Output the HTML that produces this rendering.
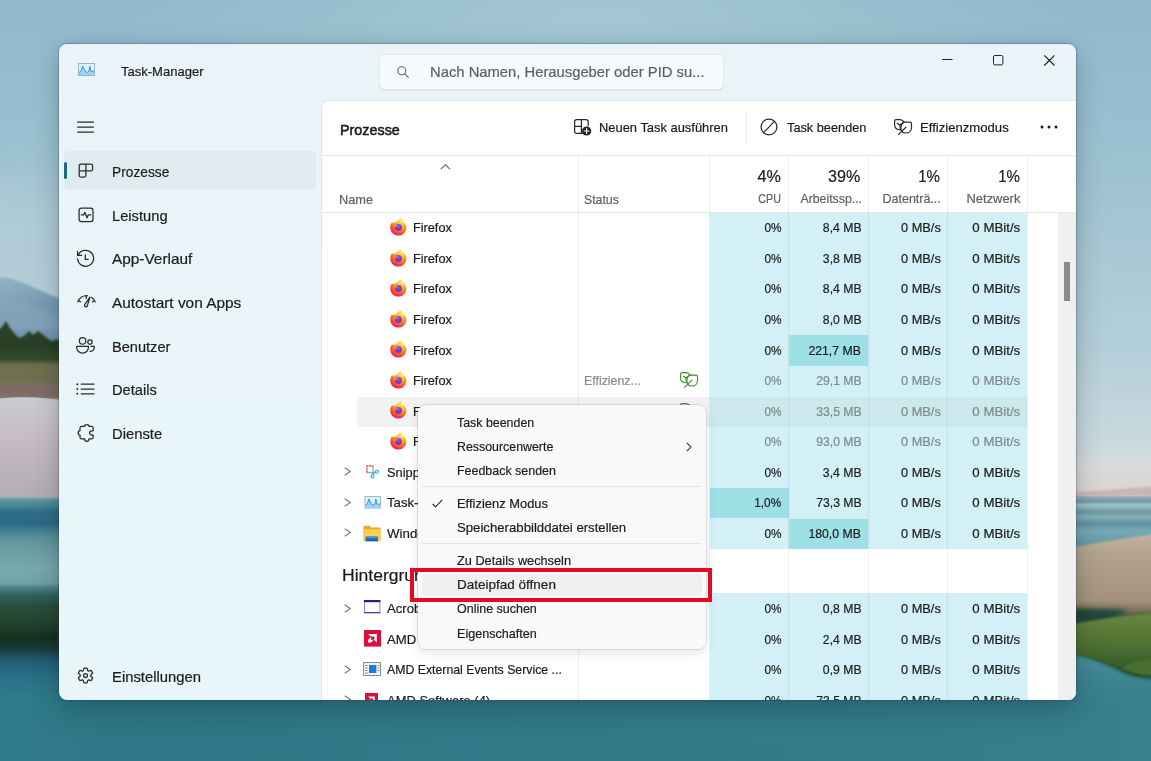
<!DOCTYPE html>
<html lang="de"><head><meta charset="utf-8"><title>Task-Manager</title>
<style>
html,body{margin:0;padding:0;}
body{width:1151px;height:761px;overflow:hidden;position:relative;background:#3f8896;font-family:"Liberation Sans",sans-serif;}
.wall{position:absolute;left:0;top:0;}
.ic{position:absolute;overflow:visible;}
.t{position:absolute;white-space:nowrap;line-height:1;-webkit-text-stroke:0.2px currentColor;}
.semi{-webkit-text-stroke:0.55px #1a1a1a;}
.win{position:absolute;left:59px;top:44px;width:1017px;height:656px;border-radius:8px;background:linear-gradient(180deg,#eaf3f8 0px,#e9f4f8 120px,#e8f5f9 420px);
 box-shadow:0 0 0 1px rgba(40,60,72,0.26), 0 10px 30px rgba(0,0,0,0.21), 0 0 10px rgba(0,0,0,0.09);}
.search{position:absolute;left:380px;top:55px;width:343px;height:33.5px;border-radius:5px;background:#f8fbfd;box-shadow:0 0 0 1px #e1e9ed, 0 1px 0 1px #d6dfe3;}
.navsel{position:absolute;left:64px;top:151px;width:252px;height:39px;border-radius:5px;background:#e0ebef;}
.navbar{position:absolute;left:64.3px;top:162.3px;width:3px;height:16.6px;border-radius:1.5px;background:#1f6a80;}
.panel{position:absolute;left:321px;top:100px;width:755px;height:600px;box-sizing:border-box;background:#fff;border-top-left-radius:8px;border-bottom-right-radius:8px;border-left:1px solid #dfe7ea;border-top:1px solid #dfe7ea;}
.tbdiv{position:absolute;left:745.6px;top:110px;width:1px;height:34px;background:#ececec;}
.hl{position:absolute;left:322px;width:754px;height:1px;background:#e6ecee;}
.blue{position:absolute;left:709.8px;width:317.7px;background:#d2f0f5;}
.dk{position:absolute;background:#9de0e6;}
.vl{position:absolute;top:156px;width:1px;height:544px;background:rgba(120,130,135,0.13);}
.selrow{position:absolute;left:356.5px;top:397px;width:353.3px;height:29.7px;background:#f1f3f3;}
.selblue{position:absolute;left:709.8px;top:397px;width:317.7px;height:29.7px;background:#cce8ec;}
.sbtrack{position:absolute;left:1058px;top:212.5px;width:18px;height:487.5px;background:#f0f0f0;border-bottom-right-radius:8px;}
.sbthumb{position:absolute;left:1064.2px;top:262px;width:5.6px;height:39px;background:#8b8b8b;}
.clip{position:absolute;left:0;top:0;width:1151px;height:700px;overflow:hidden;}
.menu{position:absolute;left:418px;top:405px;width:288px;height:244px;border-radius:8px;background:#f9f9f9;box-shadow:0 0 0 1px rgba(0,0,0,0.09), 0 4px 12px rgba(0,0,0,0.10);}
.mhl{position:absolute;left:421.5px;top:574px;width:280.7px;height:22.4px;border-radius:4px;background:#efefef;}
.msep{position:absolute;left:422px;width:280px;height:1px;background:#e4e4e4;}
.red{position:absolute;left:410px;top:568px;width:301.5px;height:34.2px;box-sizing:border-box;border:4.5px solid #e30b20;}
</style></head>
<body>
<svg width="0" height="0" style="position:absolute"><defs><radialGradient id="ffg" cx="0.7" cy="0.15" r="0.95"><stop offset="0" stop-color="#fff36b"/><stop offset="0.3" stop-color="#ffbd2e"/><stop offset="0.6" stop-color="#ff7a1a"/><stop offset="0.85" stop-color="#f5304c"/><stop offset="1" stop-color="#e0207a"/></radialGradient><radialGradient id="ffp" cx="0.5" cy="0.3" r="0.7"><stop offset="0" stop-color="#9a4df0"/><stop offset="1" stop-color="#5a35c8"/></radialGradient></defs></svg>

<svg class="wall" width="1151" height="761" viewBox="0 0 1151 761">
<defs>
<linearGradient id="sky" x1="0" y1="0" x2="0" y2="1">
<stop offset="0" stop-color="#8fb9cb"/><stop offset="0.2" stop-color="#9bc1d1"/><stop offset="0.46" stop-color="#b4cfd9"/><stop offset="0.59" stop-color="#cbdadf"/><stop offset="0.61" stop-color="#d8dbdd"/><stop offset="0.64" stop-color="#dcd5d6"/><stop offset="1" stop-color="#dcd5d6"/>
</linearGradient>
<radialGradient id="skyglow" cx="0.52" cy="0.05" r="0.42">
<stop offset="0" stop-color="#a6c8d4" stop-opacity="0.9"/><stop offset="1" stop-color="#a6c8d4" stop-opacity="0"/>
</radialGradient>
<linearGradient id="lwater" x1="0" y1="0" x2="0" y2="1">
<stop offset="0" stop-color="#9fb0ba"/><stop offset="0.011" stop-color="#5a94a2"/><stop offset="0.03" stop-color="#4a8796"/><stop offset="0.044" stop-color="#3a7a8e"/><stop offset="0.052" stop-color="#2f6f88"/><stop offset="0.1" stop-color="#2d6a85"/><stop offset="0.122" stop-color="#3f7f90"/><stop offset="0.148" stop-color="#5b9098"/><stop offset="0.196" stop-color="#6a9fa5"/><stop offset="0.27" stop-color="#78a9ab"/><stop offset="0.32" stop-color="#6fa0a3"/><stop offset="0.332" stop-color="#4f858c"/><stop offset="0.365" stop-color="#2f6058"/><stop offset="0.406" stop-color="#2a4d3a"/><stop offset="0.476" stop-color="#22402c"/><stop offset="0.52" stop-color="#14301f"/><stop offset="0.557" stop-color="#173a38"/><stop offset="0.598" stop-color="#215a6e"/><stop offset="0.657" stop-color="#266a83"/><stop offset="0.716" stop-color="#2b7088"/><stop offset="0.75" stop-color="#2f7a8c"/><stop offset="0.86" stop-color="#2f7b8b"/><stop offset="1" stop-color="#2f7888"/>
</linearGradient>
<linearGradient id="rwater" x1="0" y1="0" x2="0" y2="1">
<stop offset="0" stop-color="#8fa9b5"/><stop offset="0.011" stop-color="#86a6b1"/><stop offset="0.021" stop-color="#6f9aa6"/><stop offset="0.034" stop-color="#9dc6cb"/><stop offset="0.053" stop-color="#7aa6af"/><stop offset="0.06" stop-color="#6c9aa6"/><stop offset="0.08" stop-color="#85b0b6"/><stop offset="0.094" stop-color="#6f9fab"/><stop offset="0.106" stop-color="#5f92a3"/><stop offset="0.128" stop-color="#76a9b3"/><stop offset="0.166" stop-color="#6a9fad"/><stop offset="0.196" stop-color="#5f96a6"/><stop offset="0.43" stop-color="#2f5f5a"/><stop offset="0.487" stop-color="#2f6a70"/><stop offset="0.58" stop-color="#3a8a96"/><stop offset="0.638" stop-color="#468c98"/><stop offset="0.77" stop-color="#3d8591"/><stop offset="1" stop-color="#36808c"/>
</linearGradient>
<linearGradient id="bot" x1="0" y1="0" x2="1" y2="0">
<stop offset="0" stop-color="#2f7b8b"/><stop offset="0.12" stop-color="#2f7786"/><stop offset="0.85" stop-color="#347d8b"/><stop offset="1" stop-color="#37808d"/>
</linearGradient>
<linearGradient id="botfade" x1="0" y1="0" x2="0" y2="1">
<stop offset="0" stop-color="#fff" stop-opacity="0"/><stop offset="1" stop-color="#fff" stop-opacity="1"/>
</linearGradient>
<mask id="botmask"><rect x="0" y="660" width="1151" height="45" fill="url(#botfade)"/><rect x="0" y="704" width="1151" height="60" fill="#fff"/></mask>
<linearGradient id="sand" x1="0" y1="0" x2="0" y2="1">
<stop offset="0" stop-color="#cbcbd2"/><stop offset="0.45" stop-color="#c5bcc2"/><stop offset="1" stop-color="#b2acb4"/>
</linearGradient>
<linearGradient id="mount" x1="0" y1="0" x2="0.3" y2="1">
<stop offset="0" stop-color="#93b3c6"/><stop offset="0.5" stop-color="#7a9db4"/><stop offset="1" stop-color="#7296ae"/>
</linearGradient>
<linearGradient id="reed" x1="0" y1="0" x2="0" y2="1">
<stop offset="0" stop-color="#c2b49e"/><stop offset="0.25" stop-color="#b3a38d"/><stop offset="0.8" stop-color="#a4937c"/><stop offset="0.93" stop-color="#7a6f58"/><stop offset="1" stop-color="#3d4c3c"/>
</linearGradient>
<linearGradient id="grass" x1="0" y1="0" x2="0" y2="1">
<stop offset="0" stop-color="#67883f"/><stop offset="0.6" stop-color="#4e7131"/><stop offset="1" stop-color="#345a28"/>
</linearGradient>
<filter id="b2" x="-20%" y="-20%" width="140%" height="140%"><feGaussianBlur stdDeviation="2"/></filter>
<filter id="b1" x="-20%" y="-20%" width="140%" height="140%"><feGaussianBlur stdDeviation="0.8"/></filter>
</defs>
<rect width="1151" height="761" fill="url(#sky)"/>
<rect width="1151" height="500" fill="url(#skyglow)"/>
<!-- water full width -->
<rect x="0" y="496" width="1151" height="265" fill="url(#rwater)"/>
<!-- left side water/reflection -->
<rect x="-10" y="497" width="330" height="271" fill="url(#lwater)"/>
<!-- bottom strip blend -->
<rect x="0" y="655" width="1151" height="110" fill="url(#bot)" mask="url(#botmask)"/>
<ellipse cx="0" cy="270" rx="170" ry="90" fill="#c2d3d9" opacity="0.35" filter="url(#b2)" style="filter:blur(25px)"/>
<!-- left mountain -->
<path d="M-5 279 C2 277 6 277 12 279 C24 283 36 288 48 294 C55 297 62 299 72 304 L72 345 L-5 345 Z" fill="url(#mount)" filter="url(#b1)"/>
<path d="M-5 300 C10 296 22 300 34 306 C44 311 55 314 72 318 L72 330 L-5 330 Z" fill="#86a8bd" opacity="0.6" filter="url(#b2)"/>
<!-- trees -->
<path d="M-5 332 L2 327 L6 321 L10 328 L14 333 L19 338 L24 336 L29 331 L33 335 L38 331 L42 334 L47 338 L52 341 L57 339 L64 344 L72 346 L72 372 L-5 372 Z" fill="#2c4127" filter="url(#b1)"/>
<rect x="-5" y="350" width="80" height="18" fill="#35492b" opacity="0.7" filter="url(#b2)"/>
<!-- bush -->
<rect x="-5" y="362" width="80" height="30" fill="#6f7050" filter="url(#b2)"/>
<rect x="-5" y="383" width="80" height="17" fill="#7d6d63" filter="url(#b2)"/>
<!-- sand -->
<path d="M-5 399 C20 396 45 397 72 402 L72 497 L-5 497 Z" fill="url(#sand)"/>
<!-- right distant hill -->
<path d="M1060 494 C1095 491 1125 488.5 1155 486.5 L1155 496.5 L1060 496.5 Z" fill="#c6b6b6" filter="url(#b1)"/>
<!-- right reeds -->
<path d="M1068 548 C1095 543 1125 538 1155 533.5 L1155 617 L1068 617 Z" fill="url(#reed)" filter="url(#b1)"/>
<!-- dark water under reeds -->
<path d="M1068 608 L1128 610 L1104 622 L1068 625 Z" fill="#24463a" filter="url(#b2)"/>
<!-- grass shadow -->
<path d="M1068 652 C1090 655 1105 663 1120 670 C1130 676 1142 678 1155 678 L1155 660 L1068 640 Z" fill="#14361f" filter="url(#b2)"/>
<!-- right grass -->
<path d="M1068 625 C1090 621 1120 616 1155 613 L1155 662 C1140 660 1128 663 1120 668 C1105 664 1090 656 1068 653 Z" fill="url(#grass)" filter="url(#b1)"/>
<path d="M1120 668 C1130 661 1142 659 1155 660 L1155 676 C1142 676 1130 673 1120 668 Z" fill="#4a6f2e" filter="url(#b1)"/>
</svg>
<div class="win">
</div>
<svg class="ic" style="left:78px;top:63px" width="17" height="13" viewBox="0 0 17 13" ><rect x="0.5" y="0.5" width="16" height="12" fill="#dff1fb" stroke="#9db4c4" stroke-width="1"/><path d="M1 9.5 L3 8 L4.6 3 L6 6 L7.5 8.8 L9.5 9.3 L11 8 L11.8 3.2 L12.8 8 L14 8.6 L16 8 L16 12 L1 12 Z" fill="#98d2f4"/><path d="M1 9.5 L3 8 L4.6 3 L6 6 L7.5 8.8 L9.5 9.3 L11 8 L11.8 3.2 L12.8 8 L14 8.6 L16 8" fill="none" stroke="#2b8ad8" stroke-width="0.9"/></svg>
<span id="t0" class="t " style="left:120.9px;top:65.86px;font-size:12.8px;color:#1b1b1b;transform:scaleX(1.0173);transform-origin:left center">Task-Manager</span>
<div class="search"></div>
<svg class="ic" style="left:396.5px;top:66px" width="12" height="12" viewBox="0 0 12 12" ><circle cx="4.8" cy="4.8" r="4" fill="none" stroke="#5f6367" stroke-width="1.1"/><path d="M7.8 7.8 L11.3 11.3" stroke="#5f6367" stroke-width="1.1" stroke-linecap="round"/></svg>
<span id="t1" class="t " style="left:430.2px;top:65.07px;font-size:14.8px;color:#5d6164;transform:scaleX(0.9993);transform-origin:left center">Nach Namen, Herausgeber oder PID su...</span>
<svg class="ic" style="left:942px;top:59px" width="11" height="2" viewBox="0 0 11 2" ><rect x="0" y="0" width="10.5" height="1" fill="#222"/></svg>
<svg class="ic" style="left:993px;top:55px" width="11" height="11" viewBox="0 0 11 11" ><rect x="0.5" y="0.5" width="9.4" height="9.4" rx="1.4" fill="none" stroke="#222" stroke-width="1"/></svg>
<svg class="ic" style="left:1044.3px;top:54.6px" width="11" height="11" viewBox="0 0 11 11" ><path d="M0.3 0.3 L10.5 10.5 M10.5 0.3 L0.3 10.5" stroke="#1a1a1a" stroke-width="1.1"/></svg>
<svg class="ic" style="left:77.3px;top:121px" width="17" height="12" viewBox="0 0 17 12" ><path d="M0.6 1 H16.4 M0.6 6 H16.4 M0.6 11 H16.4" fill="none" stroke="#2a2a2a" stroke-width="1.25" stroke-linecap="round" stroke-linejoin="round"/></svg>
<div class="navsel"></div><div class="navbar"></div>
<svg class="ic" style="left:77.5px;top:162.5px" width="16" height="16" viewBox="0 0 16 16" ><path d="M3 1.2 H12.8 A1.8 1.8 0 0 1 14.6 3 V6.1 A1.8 1.8 0 0 1 12.8 7.9 H7.9 V12.4 A1.8 1.8 0 0 1 6.1 14.2 H3 A1.8 1.8 0 0 1 1.2 12.4 V3 A1.8 1.8 0 0 1 3 1.2 Z M7.9 1.2 V7.9 M1.2 7.9 H7.9" fill="none" stroke="#2a2a2a" stroke-width="1.25" stroke-linecap="round" stroke-linejoin="round"/></svg>
<svg class="ic" style="left:77.7px;top:206.7px" width="16" height="16" viewBox="0 0 16 16" ><rect x="1.1" y="1" width="13.9" height="13.6" rx="2.4" fill="none" stroke="#2a2a2a" stroke-width="1.25" stroke-linecap="round" stroke-linejoin="round"/><path d="M3.4 7.9 H5.7 L6.9 5.2 L9 10.8 L10.2 7.9 H12.7" fill="none" stroke="#2a2a2a" stroke-width="1.25" stroke-linecap="round" stroke-linejoin="round"/></svg>
<svg class="ic" style="left:76.2px;top:248.6px" width="19" height="19" viewBox="0 0 19 19" ><path d="M2.2 6.2 A8 8 0 1 1 1.6 9.8 M1.6 2.4 V6.4 H5.6 M9.3 5.8 V10.4 H12.2" fill="none" stroke="#2a2a2a" stroke-width="1.25" stroke-linecap="round" stroke-linejoin="round"/></svg>
<svg class="ic" style="left:76.7px;top:294.9px" width="19" height="13" viewBox="0 0 19 13" ><path d="M0.8 6.9 A9.4 9.4 0 0 1 10.6 0.75 M14.6 2.4 A9.4 9.4 0 0 1 18.2 6.9" fill="none" stroke="#2a2a2a" stroke-width="1.25" stroke-linecap="round" stroke-linejoin="round"/><path d="M1.6 5.5 L3.6 6.9 M9.2 0.9 V3.4 M17.4 5.5 L15.4 6.9" fill="none" stroke="#2a2a2a" stroke-width="1.25" stroke-linecap="round" stroke-linejoin="round" stroke-width="1.1"/><path d="M12.9 2.2 L10.3 10.9 A1.5 1.5 0 0 1 7.5 9.9 Z" fill="none" stroke="#2a2a2a" stroke-width="1.25" stroke-linecap="round" stroke-linejoin="round"/></svg>
<svg class="ic" style="left:76.3px;top:337px" width="19" height="17" viewBox="0 0 19 17" ><circle cx="6.6" cy="3.9" r="3.2" fill="none" stroke="#2a2a2a" stroke-width="1.25" stroke-linecap="round" stroke-linejoin="round"/><path d="M0.7 9.4 H12.4 V10.6 A5.85 5.6 0 0 1 0.7 10.6 Z" fill="none" stroke="#2a2a2a" stroke-width="1.25" stroke-linecap="round" stroke-linejoin="round"/><circle cx="14" cy="5" r="2.2" fill="none" stroke="#2a2a2a" stroke-width="1.25" stroke-linecap="round" stroke-linejoin="round"/><path d="M14.8 9.4 H18.3 V10.4 A4 4 0 0 1 14 14.4" fill="none" stroke="#2a2a2a" stroke-width="1.25" stroke-linecap="round" stroke-linejoin="round"/></svg>
<svg class="ic" style="left:76.3px;top:383px" width="19" height="12" viewBox="0 0 19 12" ><path d="M5.2 1.2 H18 M5.2 6 H18 M5.2 10.8 H18" fill="none" stroke="#2a2a2a" stroke-width="1.25" stroke-linecap="round" stroke-linejoin="round"/><circle cx="1.3" cy="1.2" r="1" fill="#2a2a2a"/><circle cx="1.3" cy="6" r="1" fill="#2a2a2a"/><circle cx="1.3" cy="10.8" r="1" fill="#2a2a2a"/></svg>
<svg class="ic" style="left:77px;top:423px" width="18" height="20" viewBox="0 0 18 20" ><path d="M4.5 3.4 H7.6 A2.2 1.8 0 0 1 12 3.4 H14.7 A1.5 1.5 0 0 1 16.2 4.9 V7.7 A3.6 2.2 0 0 0 16.2 12.1 V14.3 A1.5 1.5 0 0 1 14.7 15.8 H12 A2.2 2.6 0 0 1 7.6 15.8 H4.5 A1.5 1.5 0 0 1 3 14.3 V12.1 A1.8 2.2 0 0 1 3 7.7 V4.9 A1.5 1.5 0 0 1 4.5 3.4 Z" fill="none" stroke="#2a2a2a" stroke-width="1.25" stroke-linecap="round" stroke-linejoin="round"/></svg>
<svg class="ic" style="left:77.05px;top:667.1px" width="17" height="17" viewBox="0 0 17 17" ><path d="M6.99 1.05 L10.01 1.05 L10.76 3.70 L11.52 4.15 L14.20 3.47 L15.71 6.08 L13.78 8.06 L13.78 8.94 L15.71 10.92 L14.20 13.53 L11.52 12.85 L10.76 13.30 L10.01 15.95 L6.99 15.95 L6.24 13.30 L5.48 12.85 L2.80 13.53 L1.29 10.92 L3.22 8.94 L3.22 8.06 L1.29 6.08 L2.80 3.47 L5.48 4.15 L6.24 3.70 Z" fill="none" stroke="#2a2a2a" stroke-width="1.25" stroke-linecap="round" stroke-linejoin="round" stroke-width="1.1"/><circle cx="8.5" cy="8.5" r="2" fill="none" stroke="#2a2a2a" stroke-width="1.25" stroke-linecap="round" stroke-linejoin="round" stroke-width="1.1"/></svg>
<span id="t2" class="t " style="left:111.8px;top:164.57px;font-size:14.8px;color:#1b1b1b;transform:scaleX(0.9289);transform-origin:left center">Prozesse</span>
<span id="t3" class="t " style="left:111.8px;top:208.87px;font-size:14.8px;color:#1b1b1b;transform:scaleX(0.9937);transform-origin:left center">Leistung</span>
<span id="t4" class="t " style="left:111.60000000000001px;top:252.17px;font-size:14.8px;color:#1b1b1b;transform:scaleX(1.0384);transform-origin:left center">App-Verlauf</span>
<span id="t5" class="t " style="left:111.60000000000001px;top:295.97px;font-size:14.8px;color:#1b1b1b;transform:scaleX(1.0409);transform-origin:left center">Autostart von Apps</span>
<span id="t6" class="t " style="left:111.8px;top:339.57px;font-size:14.8px;color:#1b1b1b;transform:scaleX(0.9859);transform-origin:left center">Benutzer</span>
<span id="t7" class="t " style="left:111.8px;top:383.37px;font-size:14.8px;color:#1b1b1b;transform:scaleX(0.9882);transform-origin:left center">Details</span>
<span id="t8" class="t " style="left:111.8px;top:426.77px;font-size:14.8px;color:#1b1b1b;transform:scaleX(1.0006);transform-origin:left center">Dienste</span>
<span id="t9" class="t " style="left:111.8px;top:669.77px;font-size:14.8px;color:#1b1b1b;transform:scaleX(1.0016);transform-origin:left center">Einstellungen</span>
<div class="panel"></div>
<span id="t10" class="t semi" style="left:339.7px;top:121.80px;font-size:15px;color:#1a1a1a;transform:scaleX(0.9563);transform-origin:left center">Prozesse</span>
<svg class="ic" style="left:573.6px;top:118.8px" width="18" height="17" viewBox="0 0 18 17" ><path d="M9.6 14.3 H2.6 A2 2 0 0 1 0.6 12.3 V2.6 A2 2 0 0 1 2.6 0.6 H12.2 A2 2 0 0 1 14.2 2.6 V6.6 M7.4 0.6 V14.3 M0.6 7.4 H7.4" fill="none" stroke="#2a2a2a" stroke-width="1.25" stroke-linecap="round" stroke-linejoin="round"/><circle cx="12.6" cy="12" r="4.6" fill="#222"/><path d="M12.6 9.6 V14.4 M10.2 12 H15" stroke="#fff" stroke-width="1.2" stroke-linecap="round"/></svg>
<span id="t11" class="t " style="left:599.2px;top:121.86px;font-size:12.8px;color:#1b1b1b;transform:scaleX(1.0084);transform-origin:left center">Neuen Task ausführen</span>
<div class="tbdiv"></div>
<svg class="ic" style="left:760.3px;top:117.5px" width="18" height="18" viewBox="0 0 18 18" ><circle cx="9" cy="9" r="7.9" fill="none" stroke="#2a2a2a" stroke-width="1.25" stroke-linecap="round" stroke-linejoin="round"/><path d="M14.4 3.4 L3.6 14.6" fill="none" stroke="#2a2a2a" stroke-width="1.25" stroke-linecap="round" stroke-linejoin="round"/></svg>
<span id="t12" class="t " style="left:787.1px;top:121.86px;font-size:12.8px;color:#1b1b1b;transform:scaleX(0.9964);transform-origin:left center">Task beenden</span>
<svg class="ic" style="left:893.8px;top:119px" width="18" height="16" viewBox="0 0 18 16" ><path d="M10.1 3.1 C9.2 1.6 7.8 0.6 6 0.6 H2 A1.4 1.4 0 0 0 0.6 2 V6 C0.6 8.6 2.6 10.4 5.8 10.8" fill="none" stroke="#2a2a2a" stroke-width="1.2" stroke-linecap="round" stroke-linejoin="round"/><path d="M3.4 4.2 L5.8 6 M9 3.7 L5.8 6 L6.5 10.7" fill="none" stroke="#2a2a2a" stroke-width="1.2" stroke-linecap="round" stroke-linejoin="round"/><path d="M10.1 3.1 H16 A1.5 1.5 0 0 1 17.5 4.6 V8.4 C17.5 11.8 15 14 11.6 14 C8.6 14 6.9 11.8 6.9 9 C6.9 6.2 8.2 4 10.1 3.1 Z" fill="none" stroke="#2a2a2a" stroke-width="1.2" stroke-linecap="round" stroke-linejoin="round"/><path d="M11.9 8.2 L4.5 15.4" fill="none" stroke="#2a2a2a" stroke-width="1.2" stroke-linecap="round" stroke-linejoin="round"/></svg>
<span id="t13" class="t " style="left:920.0px;top:121.86px;font-size:12.8px;color:#1b1b1b;transform:scaleX(1.0249);transform-origin:left center">Effizienzmodus</span>
<svg class="ic" style="left:1039.5px;top:125.4px" width="18" height="4" viewBox="0 0 18 4" ><circle cx="2" cy="2" r="1.5" fill="#1a1a1a"/><circle cx="9" cy="2" r="1.5" fill="#1a1a1a"/><circle cx="16" cy="2" r="1.5" fill="#1a1a1a"/></svg>
<div class="hl" style="top:155.4px"></div>
<div class="hl" style="top:212px"></div>
<div class="blue" style="top:212.5px;height:336px"></div>
<div class="blue" style="top:593px;height:107px"></div>
<div class="selrow"></div><div class="selblue"></div>
<div class="dk" style="left:789px;top:335px;width:79.2px;height:30.5px"></div>
<div class="dk" style="left:710px;top:487.5px;width:78.6px;height:30.5px"></div>
<div class="dk" style="left:789px;top:518.5px;width:79.2px;height:30px"></div>
<div class="vl" style="left:578px"></div>
<div class="vl" style="left:709.3px"></div>
<div class="vl" style="left:788.3px"></div>
<div class="vl" style="left:867.8px"></div>
<div class="vl" style="left:947px"></div>
<div class="vl" style="left:1027px"></div>
<div class="sbtrack"></div><div class="sbthumb"></div>
<svg class="ic" style="left:440px;top:163.6px" width="11" height="6" viewBox="0 0 11 6" ><path d="M0.8 5.2 L5.4 0.8 L10 5.2" fill="none" stroke="#666" stroke-width="1.1"/></svg>
<span id="t14" class="t " style="left:338.7px;top:193.56px;font-size:12.8px;color:#5e6062;transform:scaleX(0.9959);transform-origin:left center">Name</span>
<span id="t15" class="t " style="left:584.0px;top:193.56px;font-size:12.8px;color:#5e6062;transform:scaleX(0.9592);transform-origin:left center">Status</span>
<span id="t16" class="t " style="right:369.6px;top:169.15px;font-size:16.6px;color:#1b1b1b;transform:scaleX(0.9756);transform-origin:right center">4%</span>
<span id="t17" class="t " style="right:290.70000000000005px;top:169.15px;font-size:16.6px;color:#1b1b1b;transform:scaleX(0.9693);transform-origin:right center">39%</span>
<span id="t18" class="t " style="right:210.89999999999998px;top:169.15px;font-size:16.6px;color:#1b1b1b;transform:scaleX(0.9089);transform-origin:right center">1%</span>
<span id="t19" class="t " style="right:131.39999999999998px;top:169.15px;font-size:16.6px;color:#1b1b1b;transform:scaleX(0.9089);transform-origin:right center">1%</span>
<span id="t20" class="t " style="right:369.6px;top:193.16px;font-size:12.8px;color:#5e6062;transform:scaleX(0.8398);transform-origin:right center">CPU</span>
<span id="t21" class="t " style="right:289.4px;top:193.16px;font-size:12.8px;color:#5e6062;transform:scaleX(0.9623);transform-origin:right center">Arbeitssp...</span>
<span id="t22" class="t " style="right:209.79999999999995px;top:193.16px;font-size:12.8px;color:#5e6062;transform:scaleX(0.9741);transform-origin:right center">Datenträ...</span>
<span id="t23" class="t " style="right:130.29999999999995px;top:193.16px;font-size:12.8px;color:#5e6062;transform:scaleX(1.0086);transform-origin:right center">Netzwerk</span>
<div class="clip">
<svg class="ic" style="left:390px;top:218.175px" width="17" height="18" viewBox="0 0 17 18" ><path d="M10.6 0.3 C12 1.8 13 2.8 13.6 4.2 C16 6 16.8 8.6 16.2 11.2 C15.4 15 12 17.6 8.2 17.6 C3.8 17.6 0.3 14.2 0.3 9.8 C0.3 7.4 1 5.6 2.2 4 C2.4 4.8 2.8 5.2 3.4 5.6 C4 4.6 5 4.2 6 4.4 C7 3 8.6 1.6 10.6 0.3 Z" fill="url(#ffg)"/><circle cx="8.5" cy="9.4" r="3.4" fill="url(#ffp)"/><path d="M4.9 9 C5.4 7.4 6.6 6.6 8 6.8 C7 7.4 7 8.2 7.6 8.6 C6.6 8.6 5.6 8.6 4.9 9 Z" fill="#ff9a2a"/></svg>
<span id="t24" class="t " style="left:413.0px;top:222.34px;font-size:12.8px;color:#1b1b1b;transform:scaleX(0.9921);transform-origin:left center">Firefox</span>
<span id="t25" class="t " style="right:369.4px;top:222.34px;font-size:12.8px;color:#1b1b1b;transform:scaleX(0.9243);transform-origin:right center">0%</span>
<span id="t26" class="t " style="right:289.79999999999995px;top:222.34px;font-size:12.8px;color:#1b1b1b;transform:scaleX(0.9545);transform-origin:right center">8,4 MB</span>
<span id="t27" class="t " style="right:210px;top:222.34px;font-size:12.8px;color:#1b1b1b;transform:scaleX(0.9993);transform-origin:right center">0 MB/s</span>
<span id="t28" class="t " style="right:130.5px;top:222.34px;font-size:12.8px;color:#1b1b1b;transform:scaleX(1.0360);transform-origin:right center">0 MBit/s</span>
<svg class="ic" style="left:390px;top:248.725px" width="17" height="18" viewBox="0 0 17 18" ><path d="M10.6 0.3 C12 1.8 13 2.8 13.6 4.2 C16 6 16.8 8.6 16.2 11.2 C15.4 15 12 17.6 8.2 17.6 C3.8 17.6 0.3 14.2 0.3 9.8 C0.3 7.4 1 5.6 2.2 4 C2.4 4.8 2.8 5.2 3.4 5.6 C4 4.6 5 4.2 6 4.4 C7 3 8.6 1.6 10.6 0.3 Z" fill="url(#ffg)"/><circle cx="8.5" cy="9.4" r="3.4" fill="url(#ffp)"/><path d="M4.9 9 C5.4 7.4 6.6 6.6 8 6.8 C7 7.4 7 8.2 7.6 8.6 C6.6 8.6 5.6 8.6 4.9 9 Z" fill="#ff9a2a"/></svg>
<span id="t29" class="t " style="left:413.0px;top:252.89px;font-size:12.8px;color:#1b1b1b;transform:scaleX(0.9921);transform-origin:left center">Firefox</span>
<span id="t30" class="t " style="right:369.4px;top:252.89px;font-size:12.8px;color:#1b1b1b;transform:scaleX(0.9243);transform-origin:right center">0%</span>
<span id="t31" class="t " style="right:289.79999999999995px;top:252.89px;font-size:12.8px;color:#1b1b1b;transform:scaleX(0.9545);transform-origin:right center">3,8 MB</span>
<span id="t32" class="t " style="right:210px;top:252.89px;font-size:12.8px;color:#1b1b1b;transform:scaleX(0.9993);transform-origin:right center">0 MB/s</span>
<span id="t33" class="t " style="right:130.5px;top:252.89px;font-size:12.8px;color:#1b1b1b;transform:scaleX(1.0360);transform-origin:right center">0 MBit/s</span>
<svg class="ic" style="left:390px;top:279.27500000000003px" width="17" height="18" viewBox="0 0 17 18" ><path d="M10.6 0.3 C12 1.8 13 2.8 13.6 4.2 C16 6 16.8 8.6 16.2 11.2 C15.4 15 12 17.6 8.2 17.6 C3.8 17.6 0.3 14.2 0.3 9.8 C0.3 7.4 1 5.6 2.2 4 C2.4 4.8 2.8 5.2 3.4 5.6 C4 4.6 5 4.2 6 4.4 C7 3 8.6 1.6 10.6 0.3 Z" fill="url(#ffg)"/><circle cx="8.5" cy="9.4" r="3.4" fill="url(#ffp)"/><path d="M4.9 9 C5.4 7.4 6.6 6.6 8 6.8 C7 7.4 7 8.2 7.6 8.6 C6.6 8.6 5.6 8.6 4.9 9 Z" fill="#ff9a2a"/></svg>
<span id="t34" class="t " style="left:413.0px;top:283.44px;font-size:12.8px;color:#1b1b1b;transform:scaleX(0.9921);transform-origin:left center">Firefox</span>
<span id="t35" class="t " style="right:369.4px;top:283.44px;font-size:12.8px;color:#1b1b1b;transform:scaleX(0.9243);transform-origin:right center">0%</span>
<span id="t36" class="t " style="right:289.79999999999995px;top:283.44px;font-size:12.8px;color:#1b1b1b;transform:scaleX(0.9545);transform-origin:right center">8,4 MB</span>
<span id="t37" class="t " style="right:210px;top:283.44px;font-size:12.8px;color:#1b1b1b;transform:scaleX(0.9993);transform-origin:right center">0 MB/s</span>
<span id="t38" class="t " style="right:130.5px;top:283.44px;font-size:12.8px;color:#1b1b1b;transform:scaleX(1.0360);transform-origin:right center">0 MBit/s</span>
<svg class="ic" style="left:390px;top:309.82500000000005px" width="17" height="18" viewBox="0 0 17 18" ><path d="M10.6 0.3 C12 1.8 13 2.8 13.6 4.2 C16 6 16.8 8.6 16.2 11.2 C15.4 15 12 17.6 8.2 17.6 C3.8 17.6 0.3 14.2 0.3 9.8 C0.3 7.4 1 5.6 2.2 4 C2.4 4.8 2.8 5.2 3.4 5.6 C4 4.6 5 4.2 6 4.4 C7 3 8.6 1.6 10.6 0.3 Z" fill="url(#ffg)"/><circle cx="8.5" cy="9.4" r="3.4" fill="url(#ffp)"/><path d="M4.9 9 C5.4 7.4 6.6 6.6 8 6.8 C7 7.4 7 8.2 7.6 8.6 C6.6 8.6 5.6 8.6 4.9 9 Z" fill="#ff9a2a"/></svg>
<span id="t39" class="t " style="left:413.0px;top:313.99px;font-size:12.8px;color:#1b1b1b;transform:scaleX(0.9921);transform-origin:left center">Firefox</span>
<span id="t40" class="t " style="right:369.4px;top:313.99px;font-size:12.8px;color:#1b1b1b;transform:scaleX(0.9243);transform-origin:right center">0%</span>
<span id="t41" class="t " style="right:289.79999999999995px;top:313.99px;font-size:12.8px;color:#1b1b1b;transform:scaleX(0.9545);transform-origin:right center">8,0 MB</span>
<span id="t42" class="t " style="right:210px;top:313.99px;font-size:12.8px;color:#1b1b1b;transform:scaleX(0.9993);transform-origin:right center">0 MB/s</span>
<span id="t43" class="t " style="right:130.5px;top:313.99px;font-size:12.8px;color:#1b1b1b;transform:scaleX(1.0360);transform-origin:right center">0 MBit/s</span>
<svg class="ic" style="left:390px;top:340.375px" width="17" height="18" viewBox="0 0 17 18" ><path d="M10.6 0.3 C12 1.8 13 2.8 13.6 4.2 C16 6 16.8 8.6 16.2 11.2 C15.4 15 12 17.6 8.2 17.6 C3.8 17.6 0.3 14.2 0.3 9.8 C0.3 7.4 1 5.6 2.2 4 C2.4 4.8 2.8 5.2 3.4 5.6 C4 4.6 5 4.2 6 4.4 C7 3 8.6 1.6 10.6 0.3 Z" fill="url(#ffg)"/><circle cx="8.5" cy="9.4" r="3.4" fill="url(#ffp)"/><path d="M4.9 9 C5.4 7.4 6.6 6.6 8 6.8 C7 7.4 7 8.2 7.6 8.6 C6.6 8.6 5.6 8.6 4.9 9 Z" fill="#ff9a2a"/></svg>
<span id="t44" class="t " style="left:413.0px;top:344.54px;font-size:12.8px;color:#1b1b1b;transform:scaleX(0.9921);transform-origin:left center">Firefox</span>
<span id="t45" class="t " style="right:369.4px;top:344.54px;font-size:12.8px;color:#1b1b1b;transform:scaleX(0.9243);transform-origin:right center">0%</span>
<span id="t46" class="t " style="right:289.79999999999995px;top:344.54px;font-size:12.8px;color:#1b1b1b;transform:scaleX(0.9545);transform-origin:right center">221,7 MB</span>
<span id="t47" class="t " style="right:210px;top:344.54px;font-size:12.8px;color:#1b1b1b;transform:scaleX(0.9993);transform-origin:right center">0 MB/s</span>
<span id="t48" class="t " style="right:130.5px;top:344.54px;font-size:12.8px;color:#1b1b1b;transform:scaleX(1.0360);transform-origin:right center">0 MBit/s</span>
<svg class="ic" style="left:390px;top:370.92500000000007px" width="17" height="18" viewBox="0 0 17 18" ><path d="M10.6 0.3 C12 1.8 13 2.8 13.6 4.2 C16 6 16.8 8.6 16.2 11.2 C15.4 15 12 17.6 8.2 17.6 C3.8 17.6 0.3 14.2 0.3 9.8 C0.3 7.4 1 5.6 2.2 4 C2.4 4.8 2.8 5.2 3.4 5.6 C4 4.6 5 4.2 6 4.4 C7 3 8.6 1.6 10.6 0.3 Z" fill="url(#ffg)"/><circle cx="8.5" cy="9.4" r="3.4" fill="url(#ffp)"/><path d="M4.9 9 C5.4 7.4 6.6 6.6 8 6.8 C7 7.4 7 8.2 7.6 8.6 C6.6 8.6 5.6 8.6 4.9 9 Z" fill="#ff9a2a"/></svg>
<span id="t49" class="t " style="left:413.0px;top:375.09px;font-size:12.8px;color:#1b1b1b;transform:scaleX(0.9921);transform-origin:left center">Firefox</span>
<span id="t50" class="t " style="right:369.4px;top:375.09px;font-size:12.8px;color:#7b8a8e;transform:scaleX(0.9243);transform-origin:right center">0%</span>
<span id="t51" class="t " style="right:289.79999999999995px;top:375.09px;font-size:12.8px;color:#7b8a8e;transform:scaleX(0.9545);transform-origin:right center">29,1 MB</span>
<span id="t52" class="t " style="right:210px;top:375.09px;font-size:12.8px;color:#7b8a8e;transform:scaleX(0.9993);transform-origin:right center">0 MB/s</span>
<span id="t53" class="t " style="right:130.5px;top:375.09px;font-size:12.8px;color:#7b8a8e;transform:scaleX(1.0360);transform-origin:right center">0 MBit/s</span>
<svg class="ic" style="left:390px;top:401.475px" width="17" height="18" viewBox="0 0 17 18" ><path d="M10.6 0.3 C12 1.8 13 2.8 13.6 4.2 C16 6 16.8 8.6 16.2 11.2 C15.4 15 12 17.6 8.2 17.6 C3.8 17.6 0.3 14.2 0.3 9.8 C0.3 7.4 1 5.6 2.2 4 C2.4 4.8 2.8 5.2 3.4 5.6 C4 4.6 5 4.2 6 4.4 C7 3 8.6 1.6 10.6 0.3 Z" fill="url(#ffg)"/><circle cx="8.5" cy="9.4" r="3.4" fill="url(#ffp)"/><path d="M4.9 9 C5.4 7.4 6.6 6.6 8 6.8 C7 7.4 7 8.2 7.6 8.6 C6.6 8.6 5.6 8.6 4.9 9 Z" fill="#ff9a2a"/></svg>
<span id="t54" class="t " style="left:413.0px;top:405.64px;font-size:12.8px;color:#1b1b1b;transform:scaleX(0.9921);transform-origin:left center">Firefox</span>
<span id="t55" class="t " style="right:369.4px;top:405.64px;font-size:12.8px;color:#7b8a8e;transform:scaleX(0.9243);transform-origin:right center">0%</span>
<span id="t56" class="t " style="right:289.79999999999995px;top:405.64px;font-size:12.8px;color:#7b8a8e;transform:scaleX(0.9545);transform-origin:right center">33,5 MB</span>
<span id="t57" class="t " style="right:210px;top:405.64px;font-size:12.8px;color:#7b8a8e;transform:scaleX(0.9993);transform-origin:right center">0 MB/s</span>
<span id="t58" class="t " style="right:130.5px;top:405.64px;font-size:12.8px;color:#7b8a8e;transform:scaleX(1.0360);transform-origin:right center">0 MBit/s</span>
<svg class="ic" style="left:390px;top:432.02500000000003px" width="17" height="18" viewBox="0 0 17 18" ><path d="M10.6 0.3 C12 1.8 13 2.8 13.6 4.2 C16 6 16.8 8.6 16.2 11.2 C15.4 15 12 17.6 8.2 17.6 C3.8 17.6 0.3 14.2 0.3 9.8 C0.3 7.4 1 5.6 2.2 4 C2.4 4.8 2.8 5.2 3.4 5.6 C4 4.6 5 4.2 6 4.4 C7 3 8.6 1.6 10.6 0.3 Z" fill="url(#ffg)"/><circle cx="8.5" cy="9.4" r="3.4" fill="url(#ffp)"/><path d="M4.9 9 C5.4 7.4 6.6 6.6 8 6.8 C7 7.4 7 8.2 7.6 8.6 C6.6 8.6 5.6 8.6 4.9 9 Z" fill="#ff9a2a"/></svg>
<span id="t59" class="t " style="left:413.0px;top:436.19px;font-size:12.8px;color:#1b1b1b;transform:scaleX(0.9921);transform-origin:left center">Firefox</span>
<span id="t60" class="t " style="right:369.4px;top:436.19px;font-size:12.8px;color:#7b8a8e;transform:scaleX(0.9243);transform-origin:right center">0%</span>
<span id="t61" class="t " style="right:289.79999999999995px;top:436.19px;font-size:12.8px;color:#7b8a8e;transform:scaleX(0.9545);transform-origin:right center">93,0 MB</span>
<span id="t62" class="t " style="right:210px;top:436.19px;font-size:12.8px;color:#7b8a8e;transform:scaleX(0.9993);transform-origin:right center">0 MB/s</span>
<span id="t63" class="t " style="right:130.5px;top:436.19px;font-size:12.8px;color:#7b8a8e;transform:scaleX(1.0360);transform-origin:right center">0 MBit/s</span>
<svg class="ic" style="left:365.8px;top:465.375px" width="14" height="14" viewBox="0 0 14 14" ><path d="M7 0.9 V7.6 H0.9" fill="none" stroke="#9aa0bc" stroke-width="1.2"/><path d="M0.9 7.6 V1.7 A0.8 0.8 0 0 1 1.7 0.9 H7" fill="none" stroke="#e0532f" stroke-width="1.5" stroke-dasharray="2 0.8"/><circle cx="10.9" cy="6.8" r="1.5" fill="none" stroke="#4ab0e0" stroke-width="1.3"/><circle cx="6.5" cy="11.4" r="1.5" fill="none" stroke="#4ab0e0" stroke-width="1.3"/><path d="M9.6 7.6 L6 8.4 M7.2 10.1 L8.2 6.6" stroke="#4ab0e0" stroke-width="1.3" fill="none"/></svg>
<svg class="ic" style="left:344.1px;top:467.375px" width="8" height="10" viewBox="0 0 8 10" ><path d="M0.7 0.7 L6.4 4.5 L0.7 8.3" fill="none" stroke="#777" stroke-width="1.05"/></svg>
<span id="t64" class="t " style="left:386.59999999999997px;top:466.74px;font-size:12.8px;color:#1b1b1b;transform:scaleX(1.0022);transform-origin:left center">Snipping Tool</span>
<span id="t65" class="t " style="right:369.4px;top:466.74px;font-size:12.8px;color:#1b1b1b;transform:scaleX(0.9243);transform-origin:right center">0%</span>
<span id="t66" class="t " style="right:289.79999999999995px;top:466.74px;font-size:12.8px;color:#1b1b1b;transform:scaleX(0.9545);transform-origin:right center">3,4 MB</span>
<span id="t67" class="t " style="right:210px;top:466.74px;font-size:12.8px;color:#1b1b1b;transform:scaleX(0.9993);transform-origin:right center">0 MB/s</span>
<span id="t68" class="t " style="right:130.5px;top:466.74px;font-size:12.8px;color:#1b1b1b;transform:scaleX(1.0360);transform-origin:right center">0 MBit/s</span>
<svg class="ic" style="left:363.6px;top:496.225px" width="17.4" height="12.6" viewBox="0 0 17 13" ><rect x="0.5" y="0.5" width="16" height="12" fill="#dff1fb" stroke="#9db4c4" stroke-width="1"/><path d="M1 9.5 L3 8 L4.6 3 L6 6 L7.5 8.8 L9.5 9.3 L11 8 L11.8 3.2 L12.8 8 L14 8.6 L16 8 L16 12 L1 12 Z" fill="#98d2f4"/><path d="M1 9.5 L3 8 L4.6 3 L6 6 L7.5 8.8 L9.5 9.3 L11 8 L11.8 3.2 L12.8 8 L14 8.6 L16 8" fill="none" stroke="#2b8ad8" stroke-width="0.9"/></svg>
<svg class="ic" style="left:344.1px;top:497.925px" width="8" height="10" viewBox="0 0 8 10" ><path d="M0.7 0.7 L6.4 4.5 L0.7 8.3" fill="none" stroke="#777" stroke-width="1.05"/></svg>
<span id="t69" class="t " style="left:386.59999999999997px;top:497.29px;font-size:12.8px;color:#1b1b1b;transform:scaleX(1.0303);transform-origin:left center">Task-Manager</span>
<span id="t70" class="t " style="right:369.4px;top:497.29px;font-size:12.8px;color:#1b1b1b;transform:scaleX(0.9243);transform-origin:right center">1,0%</span>
<span id="t71" class="t " style="right:289.79999999999995px;top:497.29px;font-size:12.8px;color:#1b1b1b;transform:scaleX(0.9545);transform-origin:right center">73,3 MB</span>
<span id="t72" class="t " style="right:210px;top:497.29px;font-size:12.8px;color:#1b1b1b;transform:scaleX(0.9993);transform-origin:right center">0 MB/s</span>
<span id="t73" class="t " style="right:130.5px;top:497.29px;font-size:12.8px;color:#1b1b1b;transform:scaleX(1.0360);transform-origin:right center">0 MBit/s</span>
<svg class="ic" style="left:363.3px;top:524.875px" width="18" height="17" viewBox="0 0 18 17" ><path d="M0.5 2 A1.2 1.2 0 0 1 1.7 0.8 H6.4 L8 2.6 H16.3 A1.2 1.2 0 0 1 17.5 3.8 V15 A1.2 1.2 0 0 1 16.3 16.2 H1.7 A1.2 1.2 0 0 1 0.5 15 Z" fill="#e9a825"/><path d="M0.5 4.2 H17.5 V15 A1.2 1.2 0 0 1 16.3 16.2 H1.7 A1.2 1.2 0 0 1 0.5 15 Z" fill="#fbd04f"/><path d="M2.5 16.2 V12.6 A1 1 0 0 1 3.5 11.6 H14.1 A1 1 0 0 1 15.1 12.6 V16.2 Z" fill="#1766bd"/><path d="M2.5 13.2 V12.6 A1 1 0 0 1 3.5 11.6 H14.1 A1 1 0 0 1 15.1 12.6 V13.2 Z" fill="#3d9be9"/></svg>
<svg class="ic" style="left:344.1px;top:528.475px" width="8" height="10" viewBox="0 0 8 10" ><path d="M0.7 0.7 L6.4 4.5 L0.7 8.3" fill="none" stroke="#777" stroke-width="1.05"/></svg>
<span id="t74" class="t " style="left:386.59999999999997px;top:527.84px;font-size:12.8px;color:#1b1b1b;transform:scaleX(1.0393);transform-origin:left center">Windows-Explorer</span>
<span id="t75" class="t " style="right:369.4px;top:527.84px;font-size:12.8px;color:#1b1b1b;transform:scaleX(0.9243);transform-origin:right center">0%</span>
<span id="t76" class="t " style="right:289.79999999999995px;top:527.84px;font-size:12.8px;color:#1b1b1b;transform:scaleX(0.9545);transform-origin:right center">180,0 MB</span>
<span id="t77" class="t " style="right:210px;top:527.84px;font-size:12.8px;color:#1b1b1b;transform:scaleX(0.9993);transform-origin:right center">0 MB/s</span>
<span id="t78" class="t " style="right:130.5px;top:527.84px;font-size:12.8px;color:#1b1b1b;transform:scaleX(1.0360);transform-origin:right center">0 MBit/s</span>
<svg class="ic" style="left:364px;top:600.375px" width="16.4" height="13.2" viewBox="0 0 16.4 13.2" ><rect x="0.5" y="0.5" width="15.4" height="12.2" fill="#fff" stroke="#8f8fd6" stroke-width="1"/><rect x="0" y="0" width="16.4" height="2.2" fill="#1f1f92"/><rect x="0" y="12.2" width="16.4" height="1" fill="#2a2a8c"/></svg>
<svg class="ic" style="left:344.1px;top:603.675px" width="8" height="10" viewBox="0 0 8 10" ><path d="M0.7 0.7 L6.4 4.5 L0.7 8.3" fill="none" stroke="#777" stroke-width="1.05"/></svg>
<span id="t79" class="t " style="left:386.59999999999997px;top:603.04px;font-size:12.8px;color:#1b1b1b;transform:scaleX(1.0260);transform-origin:left center">Acrobat Update Service</span>
<span id="t80" class="t " style="right:369.4px;top:603.04px;font-size:12.8px;color:#1b1b1b;transform:scaleX(0.9243);transform-origin:right center">0%</span>
<span id="t81" class="t " style="right:289.79999999999995px;top:603.04px;font-size:12.8px;color:#1b1b1b;transform:scaleX(0.9545);transform-origin:right center">0,8 MB</span>
<span id="t82" class="t " style="right:210px;top:603.04px;font-size:12.8px;color:#1b1b1b;transform:scaleX(0.9993);transform-origin:right center">0 MB/s</span>
<span id="t83" class="t " style="right:130.5px;top:603.04px;font-size:12.8px;color:#1b1b1b;transform:scaleX(1.0360);transform-origin:right center">0 MBit/s</span>
<svg class="ic" style="left:364px;top:630.225px" width="17" height="16.6" viewBox="0 0 18 18" preserveAspectRatio="none"><rect width="18" height="18" fill="#dc0d38"/><path d="M4.4 4.4 H13.6 V13.6 L11 11 V7 H7 Z M4.4 13.6 V10.6 L7.4 7.6 V10.6 H10.4 L7.4 13.6 Z" fill="#fff"/></svg>
<span id="t84" class="t " style="left:386.59999999999997px;top:633.59px;font-size:12.8px;color:#1b1b1b;transform:scaleX(1.0268);transform-origin:left center">AMD Crash Defender Service</span>
<span id="t85" class="t " style="right:369.4px;top:633.59px;font-size:12.8px;color:#1b1b1b;transform:scaleX(0.9243);transform-origin:right center">0%</span>
<span id="t86" class="t " style="right:289.79999999999995px;top:633.59px;font-size:12.8px;color:#1b1b1b;transform:scaleX(0.9545);transform-origin:right center">2,4 MB</span>
<span id="t87" class="t " style="right:210px;top:633.59px;font-size:12.8px;color:#1b1b1b;transform:scaleX(0.9993);transform-origin:right center">0 MB/s</span>
<span id="t88" class="t " style="right:130.5px;top:633.59px;font-size:12.8px;color:#1b1b1b;transform:scaleX(1.0360);transform-origin:right center">0 MBit/s</span>
<svg class="ic" style="left:363px;top:662.475px" width="18" height="14" viewBox="0 0 18 14" ><rect x="0.5" y="0.5" width="17" height="13" fill="#f4f4f4" stroke="#8a8a8a" stroke-width="1"/><rect x="6" y="3" width="7.4" height="8" fill="#1f7ad6"/><path d="M2 3.5 H4.6 M2 6 H4.6 M2 8.5 H4.6 M2 11 H4.6 M14.6 3.5 H16.4 M14.6 6 H16.4 M14.6 8.5 H16.4" stroke="#777" stroke-width="0.9"/></svg>
<svg class="ic" style="left:344.1px;top:664.775px" width="8" height="10" viewBox="0 0 8 10" ><path d="M0.7 0.7 L6.4 4.5 L0.7 8.3" fill="none" stroke="#777" stroke-width="1.05"/></svg>
<span id="t89" class="t " style="left:386.59999999999997px;top:664.14px;font-size:12.8px;color:#1b1b1b;transform:scaleX(0.9601);transform-origin:left center">AMD External Events Service ...</span>
<span id="t90" class="t " style="right:369.4px;top:664.14px;font-size:12.8px;color:#1b1b1b;transform:scaleX(0.9243);transform-origin:right center">0%</span>
<span id="t91" class="t " style="right:289.79999999999995px;top:664.14px;font-size:12.8px;color:#1b1b1b;transform:scaleX(0.9545);transform-origin:right center">0,9 MB</span>
<span id="t92" class="t " style="right:210px;top:664.14px;font-size:12.8px;color:#1b1b1b;transform:scaleX(0.9993);transform-origin:right center">0 MB/s</span>
<span id="t93" class="t " style="right:130.5px;top:664.14px;font-size:12.8px;color:#1b1b1b;transform:scaleX(1.0360);transform-origin:right center">0 MBit/s</span>
<svg class="ic" style="left:364.8px;top:692.925px" width="13" height="14" viewBox="0 0 18 18" preserveAspectRatio="none"><rect width="18" height="18" fill="#dc0d38"/><path d="M4.4 4.4 H13.6 V13.6 L11 11 V7 H7 Z M4.4 13.6 V10.6 L7.4 7.6 V10.6 H10.4 L7.4 13.6 Z" fill="#fff"/></svg>
<svg class="ic" style="left:344.1px;top:695.3249999999999px" width="8" height="10" viewBox="0 0 8 10" ><path d="M0.7 0.7 L6.4 4.5 L0.7 8.3" fill="none" stroke="#777" stroke-width="1.05"/></svg>
<span id="t94" class="t " style="left:386.59999999999997px;top:694.69px;font-size:12.8px;color:#1b1b1b;transform:scaleX(1.0147);transform-origin:left center">AMD Software (4)</span>
<span id="t95" class="t " style="right:369.4px;top:694.69px;font-size:12.8px;color:#1b1b1b;transform:scaleX(0.9243);transform-origin:right center">0%</span>
<span id="t96" class="t " style="right:289.79999999999995px;top:694.69px;font-size:12.8px;color:#1b1b1b;transform:scaleX(0.9545);transform-origin:right center">73,5 MB</span>
<span id="t97" class="t " style="right:210px;top:694.69px;font-size:12.8px;color:#1b1b1b;transform:scaleX(0.9993);transform-origin:right center">0 MB/s</span>
<span id="t98" class="t " style="right:130.5px;top:694.69px;font-size:12.8px;color:#1b1b1b;transform:scaleX(1.0360);transform-origin:right center">0 MBit/s</span>
<span id="t99" class="t " style="left:584.0px;top:375.09px;font-size:12.8px;color:#8a8a8a;transform:scaleX(0.9658);transform-origin:left center">Effizienz...</span>
<svg class="ic" style="left:680px;top:372.32500000000005px" width="18" height="16" viewBox="0 0 18 16" ><path d="M10.1 3.1 C9.2 1.6 7.8 0.6 6 0.6 H2 A1.4 1.4 0 0 0 0.6 2 V6 C0.6 8.6 2.6 10.4 5.8 10.8" fill="none" stroke="#3a8a2a" stroke-width="1.1" stroke-linecap="round" stroke-linejoin="round"/><path d="M3.4 4.2 L5.8 6 M9 3.7 L5.8 6 L6.5 10.7" fill="none" stroke="#3a8a2a" stroke-width="1.1" stroke-linecap="round" stroke-linejoin="round"/><path d="M10.1 3.1 H16 A1.5 1.5 0 0 1 17.5 4.6 V8.4 C17.5 11.8 15 14 11.6 14 C8.6 14 6.9 11.8 6.9 9 C6.9 6.2 8.2 4 10.1 3.1 Z" fill="none" stroke="#3a8a2a" stroke-width="1.1" stroke-linecap="round" stroke-linejoin="round"/><path d="M11.9 8.2 L4.5 15.4" fill="none" stroke="#3a8a2a" stroke-width="1.1" stroke-linecap="round" stroke-linejoin="round"/></svg>
<span id="t100" class="t " style="left:584.0px;top:405.64px;font-size:12.8px;color:#8a8a8a;transform:scaleX(0.9658);transform-origin:left center">Effizienz...</span>
<svg class="ic" style="left:680px;top:402.875px" width="18" height="16" viewBox="0 0 18 16" ><path d="M10.1 3.1 C9.2 1.6 7.8 0.6 6 0.6 H2 A1.4 1.4 0 0 0 0.6 2 V6 C0.6 8.6 2.6 10.4 5.8 10.8" fill="none" stroke="#3a8a2a" stroke-width="1.1" stroke-linecap="round" stroke-linejoin="round"/><path d="M3.4 4.2 L5.8 6 M9 3.7 L5.8 6 L6.5 10.7" fill="none" stroke="#3a8a2a" stroke-width="1.1" stroke-linecap="round" stroke-linejoin="round"/><path d="M10.1 3.1 H16 A1.5 1.5 0 0 1 17.5 4.6 V8.4 C17.5 11.8 15 14 11.6 14 C8.6 14 6.9 11.8 6.9 9 C6.9 6.2 8.2 4 10.1 3.1 Z" fill="none" stroke="#3a8a2a" stroke-width="1.1" stroke-linecap="round" stroke-linejoin="round"/><path d="M11.9 8.2 L4.5 15.4" fill="none" stroke="#3a8a2a" stroke-width="1.1" stroke-linecap="round" stroke-linejoin="round"/></svg>
<span id="t101" class="t " style="left:341.8px;top:567.56px;font-size:16px;color:#1b1b1b;transform:scaleX(1.0957);transform-origin:left center">Hintergrundprozesse (101)</span>
</div>
<div class="menu"></div>
<div class="mhl"></div>
<div class="msep" style="top:486px"></div><div class="msep" style="top:543px"></div>
<span id="t102" class="t " style="left:456.7px;top:416.56px;font-size:12.8px;color:#1c1c1c;transform:scaleX(0.9688);transform-origin:left center">Task beenden</span>
<span id="t103" class="t " style="left:456.7px;top:441.16px;font-size:12.8px;color:#1c1c1c;transform:scaleX(0.9671);transform-origin:left center">Ressourcenwerte</span>
<span id="t104" class="t " style="left:456.7px;top:465.46px;font-size:12.8px;color:#1c1c1c;transform:scaleX(0.9720);transform-origin:left center">Feedback senden</span>
<span id="t105" class="t " style="left:456.7px;top:498.06px;font-size:12.8px;color:#1c1c1c;transform:scaleX(1.0099);transform-origin:left center">Effizienz Modus</span>
<span id="t106" class="t " style="left:456.7px;top:521.96px;font-size:12.8px;color:#1c1c1c;transform:scaleX(1.0295);transform-origin:left center">Speicherabbilddatei erstellen</span>
<span id="t107" class="t " style="left:456.7px;top:554.56px;font-size:12.8px;color:#1c1c1c;transform:scaleX(0.9955);transform-origin:left center">Zu Details wechseln</span>
<span id="t108" class="t " style="left:456.7px;top:579.16px;font-size:12.8px;color:#1c1c1c;transform:scaleX(1.0556);transform-origin:left center">Dateipfad öffnen</span>
<span id="t109" class="t " style="left:456.7px;top:603.46px;font-size:12.8px;color:#1c1c1c;transform:scaleX(0.9754);transform-origin:left center">Online suchen</span>
<span id="t110" class="t " style="left:456.7px;top:627.76px;font-size:12.8px;color:#1c1c1c;transform:scaleX(0.9839);transform-origin:left center">Eigenschaften</span>
<svg class="ic" style="left:685.6px;top:441.6px" width="6" height="10" viewBox="0 0 6 10" ><path d="M0.8 0.8 L5 5 L0.8 9.2" fill="none" stroke="#2a2a2a" stroke-width="1.05"/></svg>
<svg class="ic" style="left:431.6px;top:499.4px" width="11" height="9" viewBox="0 0 11 9" ><path d="M0.6 5 L3.6 7.8 L10.3 0.8" fill="none" stroke="#1f1f1f" stroke-width="1.1"/></svg>
<div class="red"></div>
</body></html>
